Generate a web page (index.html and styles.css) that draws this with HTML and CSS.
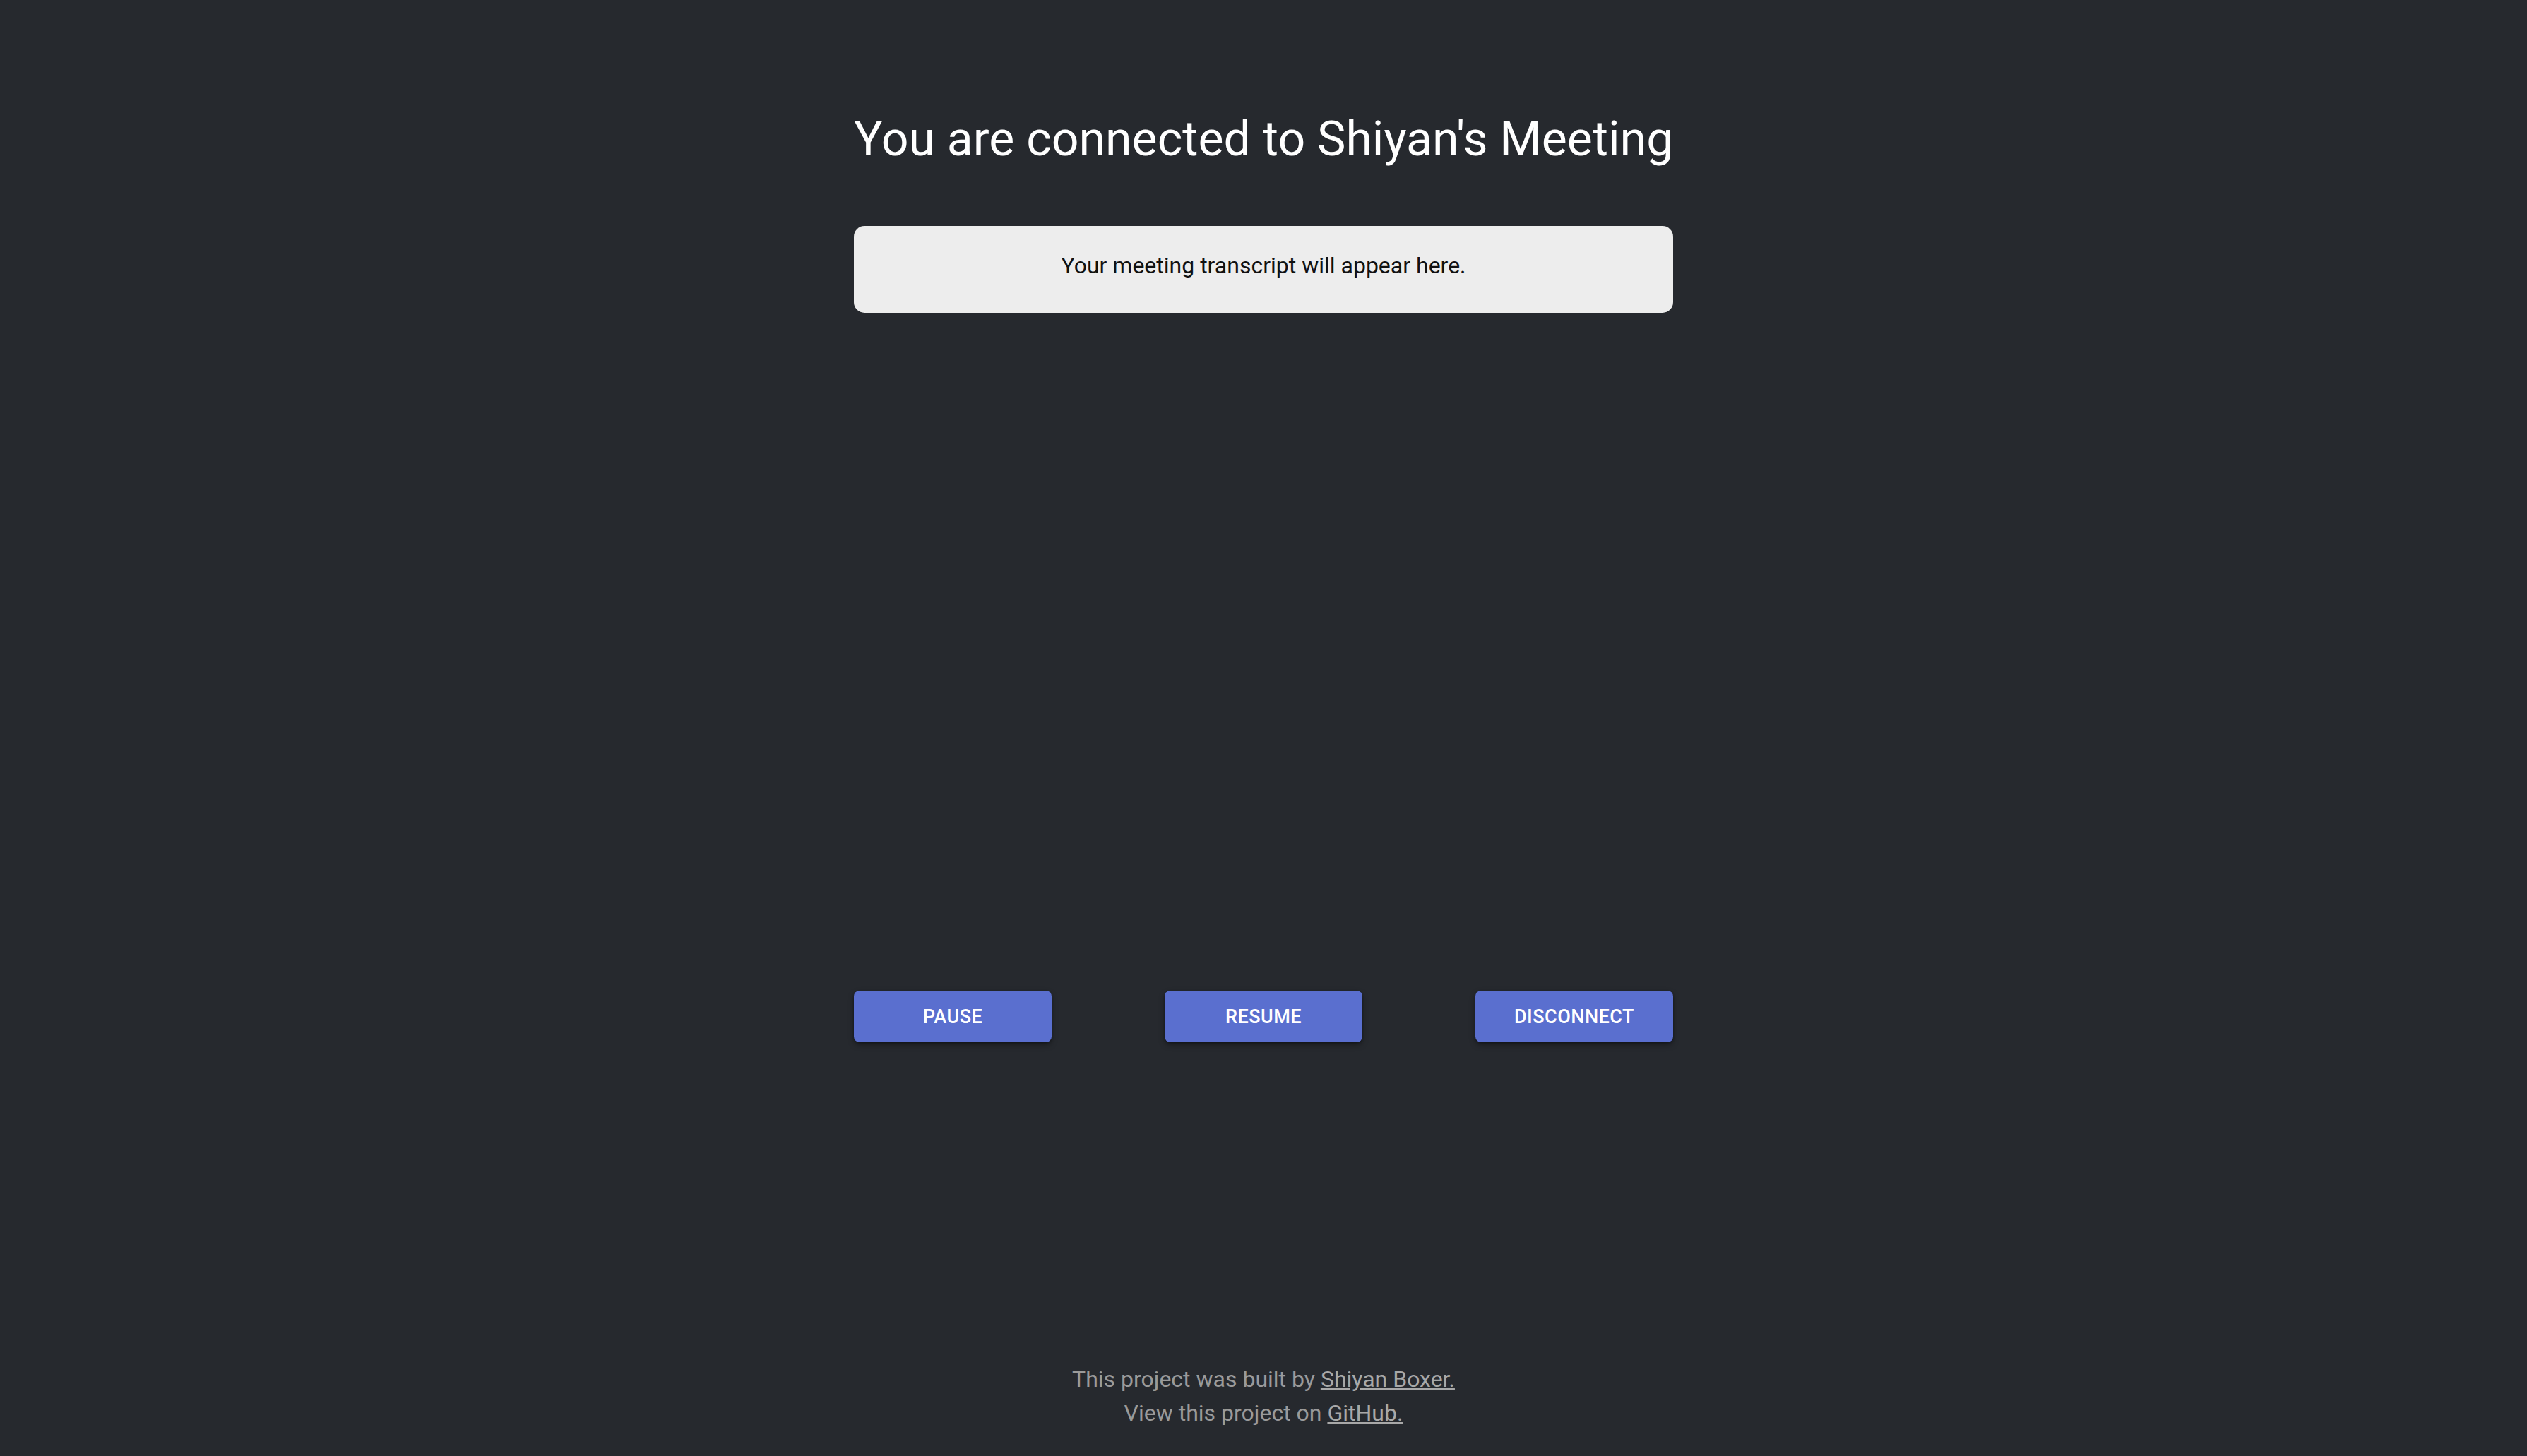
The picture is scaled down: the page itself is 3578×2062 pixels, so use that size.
FILE: index.html
```html
<!DOCTYPE html>
<html lang="en">
<head>
<meta charset="utf-8">
<title>Meeting</title>
<link rel="stylesheet" href="styles.css">
</head>
<body>
<div class="page">
  <main class="main">
    <h1 class="title">You are connected to Shiyan's Meeting</h1>
    <div class="transcript">
      <p class="transcript-text">Your meeting transcript will appear here.</p>
    </div>
    <div class="controls">
      <button class="btn">PAUSE</button>
      <button class="btn">RESUME</button>
      <button class="btn">DISCONNECT</button>
    </div>
  </main>
  <footer class="footer">
    <p class="footer-line">This project was built by <a class="footer-link" href="#">Shiyan Boxer.</a></p>
    <p class="footer-line">View this project on <a class="footer-link" href="#">GitHub.</a></p>
  </footer>
</div>
</body>
</html>
```

FILE: styles.css
```css
html, body {
  margin: 0;
  padding: 0;
  height: 100%;
}
body {
  background: #26292e;
  font-family: Roboto, "Noto Sans", "Liberation Sans", sans-serif;
  overflow: hidden;
}
.page {
  display: flex;
  flex-direction: column;
  align-items: center;
}
.main {
  width: 1160px;
  padding-top: 156px;
  display: flex;
  flex-direction: column;
}
.title {
  margin: 0;
  font-size: 68px;
  line-height: 82px;
  font-weight: 400;
  color: #ffffff;
  text-align: center;
  white-space: nowrap;
}
.transcript {
  margin-top: 82px;
  height: 123px;
  box-sizing: border-box;
  background: #ededed;
  border-radius: 15px;
  padding-top: 32px;
}
.transcript-text {
  margin: 0;
  font-size: 32px;
  line-height: 48px;
  color: #111111;
  text-align: center;
}
.controls {
  margin-top: 960px;
  display: flex;
  justify-content: space-between;
}
.btn {
  width: 280px;
  height: 73px;
  border: none;
  border-radius: 8px;
  background: #5a6fcf;
  color: #ffffff;
  font-family: Roboto, "Noto Sans", "Liberation Sans", sans-serif;
  font-size: 27px;
  font-weight: 500;
  letter-spacing: 0.5px;
  box-shadow: 0 4px 8px rgba(0, 0, 0, 0.35), 0 1px 3px rgba(0, 0, 0, 0.3);
  cursor: pointer;
}
.footer {
  margin-top: 453px;
  text-align: center;
}
.footer-line {
  margin: 0;
  font-size: 32px;
  line-height: 48px;
  color: #9a9a9a;
}
.footer-link {
  color: #a8a8a8;
  text-decoration: underline;
}
```
